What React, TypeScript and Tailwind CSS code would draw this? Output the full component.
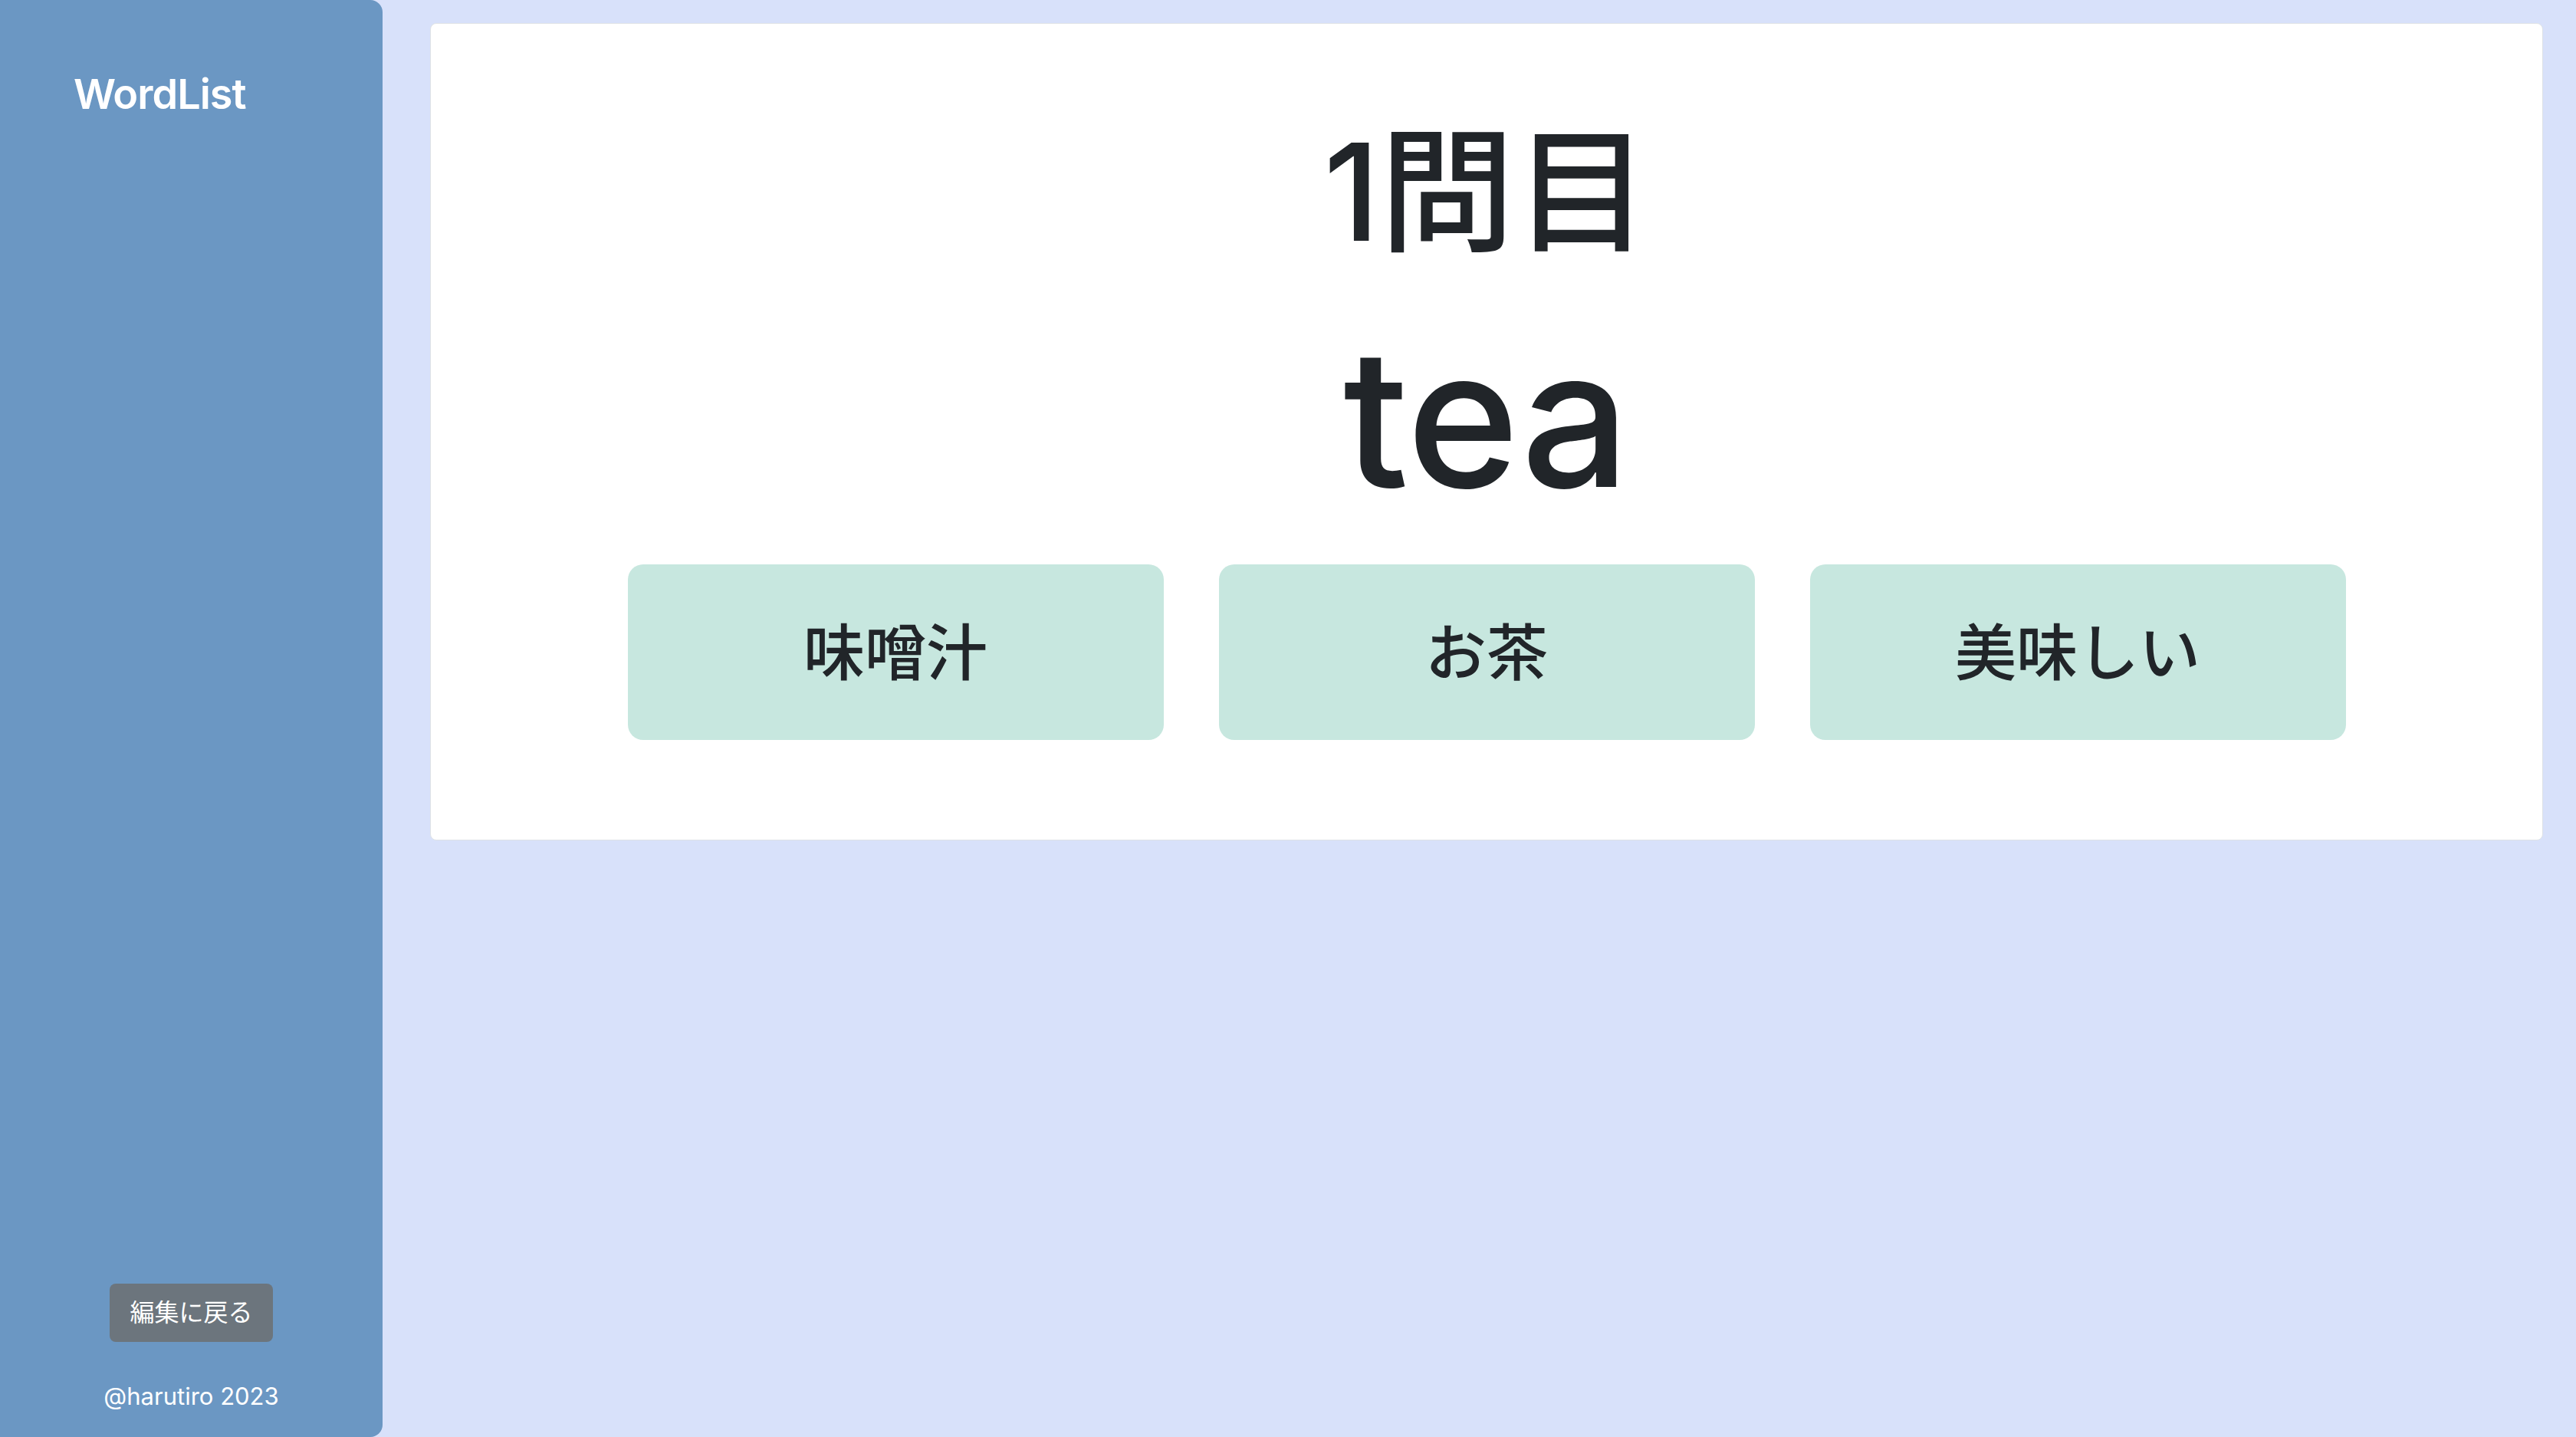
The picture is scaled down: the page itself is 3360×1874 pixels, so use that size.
import React from 'react';

const choices = ['味噌汁', 'お茶', '美味しい'];

const Sidebar: React.FC = () => {
  return (
    <aside className="w-[499px] min-h-[1874px] bg-[#6b97c3] rounded-r-[16px] flex flex-col justify-between text-white shrink-0">
      <div className="pt-[91px] pl-[96px]">
        <h1 className="text-[54px] leading-[1.2] font-semibold tracking-[-1px]">WordList</h1>
      </div>
      <div className="flex flex-col items-center pb-[30px]">
        <button className="h-[76px] px-[26px] rounded-[8px] bg-[#6c757d] text-[32px] leading-none text-white flex items-center">
          編集に戻る
        </button>
        <p className="mt-[48px] text-[31px] leading-[1.5]">@harutiro 2023</p>
      </div>
    </aside>
  );
};

const QuizCard: React.FC = () => {
  return (
    <div className="bg-white border border-[#dee2e6] rounded-[8px] flex flex-col items-center pt-[113px] pb-[130px] text-[#212529]">
      <h2 className="text-[176px] leading-[1.2] font-medium">1問目</h2>
      <h3 className="mt-[39px] text-[250px] leading-[1.2] font-medium">tea</h3>
      <div className="mt-[42px] grid grid-cols-3 gap-[72px] w-[2241px]">
        {choices.map((c) => (
          <button
            key={c}
            className="h-[229px] rounded-[20px] bg-[#c7e7df] text-[80px] leading-none font-medium text-[#212529] flex items-center justify-center"
          >
            {c}
          </button>
        ))}
      </div>
    </div>
  );
};

export default function App() {
  return (
    <div
      className="min-h-[1874px] w-full bg-[#d8e1fa] flex"
      style={{ fontFamily: 'Inter, "Noto Sans CJK JP", sans-serif' }}
    >
      <Sidebar />
      <main className="flex-1 pl-[62px] pr-[43px] pt-[30px]">
        <QuizCard />
      </main>
    </div>
  );
}
